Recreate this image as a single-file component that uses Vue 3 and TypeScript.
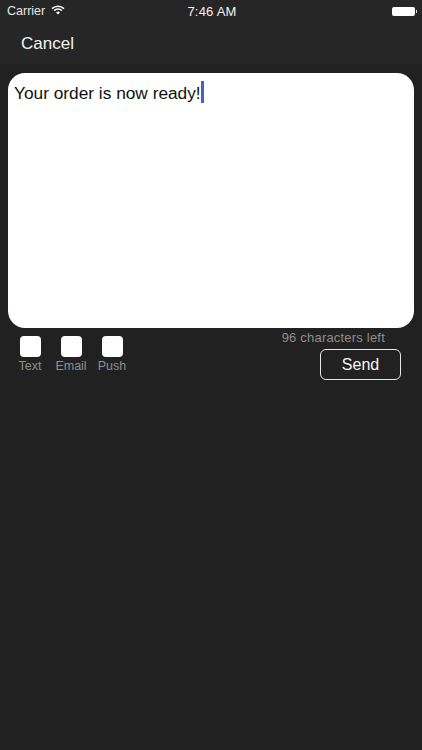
<script setup lang="ts">
const channels: string[] = ['Text', 'Email', 'Push']
</script>

<template>
  <div class="screen">
    <header class="top">
      <div class="status">
        <div class="status-left">
          <span class="carrier">Carrier</span>
          <svg class="wifi" width="14" height="10" viewBox="0 0 14 10">
            <path d="M1 3.6 A8.6 8.6 0 0 1 13 3.6" fill="none" stroke="#fff" stroke-width="1.5" />
            <path d="M3.2 5.6 A5.4 5.4 0 0 1 10.8 5.6" fill="none" stroke="#fff" stroke-width="1.5" />
            <path d="M5.1 7.4 A2.7 2.7 0 0 1 8.9 7.4 L7 9.6 Z" fill="#fff" />
          </svg>
        </div>
        <span class="time">7:46 AM</span>
        <div class="battery"><span class="cell"></span><span class="nub"></span></div>
      </div>
      <div class="nav"><span class="cancel">Cancel</span></div>
    </header>

    <main class="body">
      <div class="editor">
        <span class="message">Your order is now ready!</span><span class="caret"></span>
      </div>
      <div class="controls">
        <div class="channels">
          <div v-for="c in channels" :key="c" class="channel">
            <span class="box"></span>
            <span class="label">{{ c }}</span>
          </div>
        </div>
        <div class="actions">
          <span class="count">96 characters left</span>
          <button class="send" type="button">Send</button>
        </div>
      </div>
    </main>
  </div>
</template>

<style scoped>
.screen {
  width: 422px;
  height: 750px;
  background: #212121;
  font-family: "Liberation Sans", Arial, sans-serif;
  color: #fff;
  overflow: hidden;
}
.top {
  height: 65px;
  background: #262626;
  border-bottom: 1px solid #202020;
  box-sizing: border-box;
}
.status {
  height: 21px;
  padding: 1px 6px 0;
  box-sizing: border-box;
  display: grid;
  grid-template-columns: 1fr auto 1fr;
  align-items: center;
}
.status-left {
  display: flex;
  align-items: center;
  gap: 6px;
}
.carrier {
  font-size: 12.5px;
  color: #e6e6e6;
  margin-left: 1px;
}
.wifi {
  margin-top: -2px;
}
.time {
  font-size: 13px;
  letter-spacing: 0.2px;
  color: #f2f2f2;
  margin-left: 2px;
}
.battery {
  justify-self: end;
  display: flex;
  align-items: center;
  gap: 1px;
  margin-right: -1px;
}
.cell {
  width: 23px;
  height: 9px;
  background: #fff;
  border-radius: 2px;
}
.nub {
  width: 1.5px;
  height: 3px;
  background: #ddd;
}
.nav {
  height: 44px;
  padding: 1px 0 0 21px;
  box-sizing: border-box;
  display: flex;
  align-items: center;
}
.cancel {
  font-size: 17px;
  color: #f2f2f2;
}
.body {
  padding: 8px 8px 0;
}
.editor {
  height: 255px;
  background: #fff;
  border-radius: 17px;
  padding: 7px 6px;
  box-sizing: border-box;
  color: #111;
  font-size: 17.3px;
  line-height: 26px;
  display: flex;
  align-items: flex-start;
}
.caret {
  flex: 0 0 3px;
  height: 22px;
  margin-top: 1px;
  background: #4a5fc4;
}
.controls {
  display: flex;
  justify-content: space-between;
  padding: 0 13px 0 10px;
}
.channels {
  display: flex;
  gap: 17px;
  padding-top: 8px;
}
.channel {
  width: 24px;
  display: flex;
  flex-direction: column;
  align-items: center;
  gap: 1px;
}
.box {
  width: 21px;
  height: 21px;
  background: #fff;
  border-radius: 4px;
}
.label {
  font-size: 12.5px;
  line-height: 16px;
  color: #8e8e8e;
  white-space: nowrap;
}
.actions {
  display: flex;
  flex-direction: column;
  align-items: flex-end;
}
.count {
  font-size: 13px;
  line-height: 20px;
  margin-right: 16px;
  letter-spacing: 0.2px;
  color: #8e8e8e;
}
.send {
  width: 81px;
  height: 31px;
  margin-top: 1px;
  background: transparent;
  border: 1px solid #e6e6e6;
  border-radius: 6px;
  color: #f5f5f5;
  font: inherit;
  font-size: 16px;
  padding: 0;
}
</style>
